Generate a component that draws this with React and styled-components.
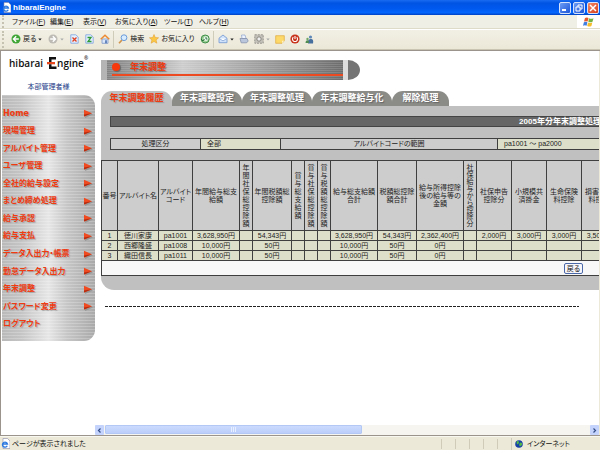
import React from "react";
import styled, { createGlobalStyle, css } from "styled-components";

const Global = createGlobalStyle`
  * { box-sizing: border-box; }
  html, body { margin: 0; padding: 0; background: #ece9d8; }
  body, button, a { font-family: "Liberation Sans", "Noto Sans CJK JP", sans-serif; font-feature-settings: "palt"; }
  button { padding: 0; margin: 0; border: 0; background: none; color: inherit; }
  a { text-decoration: none; }
`;

const Window = styled.div`
  height: 100vh;
  display: flex;
  flex-direction: column;
  overflow: hidden;
  color: #222;
`;

const TitleBar = styled.header`
  flex: none;
  height: 15px;
  display: flex;
  align-items: center;
  gap: 2px;
  padding: 0 1px 0 2px;
  background: linear-gradient(#1a6cf0, #0054e3 20%, #0058ee 55%, #0366fd 85%, #0040c0);
`;

const WindowTitle = styled.h1`
  flex: 1;
  margin: 0;
  font: bold 8px/14px "Liberation Sans", sans-serif;
  color: #fff;
`;

const WindowButton = styled.button`
  width: 12px;
  height: 12px;
  display: grid;
  place-items: center;
  border: 1px solid #d5e2fb;
  border-radius: 2px;
  background: ${(p) => (p.$close ? "linear-gradient(135deg, #f08a68, #d8401c)" : "linear-gradient(135deg, #6c9cf5, #1c55d8)")};
`;

const MenuRow = styled.div`
  flex: none;
  height: 14px;
  display: flex;
  background: #f0efe6;
  border-bottom: 1px solid #dedbc8;
`;

const Menu = styled.nav`
  flex: 1;
  display: grid;
  grid-template-columns: 38px 33px 32px 49px 35px 1fr;
  align-items: center;
  justify-items: start;
  margin-left: 2px;
  padding-left: 8px;
  border-left: 2px dotted #c5c2b2;
`;

const MenuItem = styled.button`
  font-size: 7px;
  line-height: 12px;
  white-space: nowrap;
  color: #111;
`;

const FlagBox = styled.div`
  width: 23px;
  display: grid;
  place-items: center;
  background: #fff;
`;

const Toolbar = styled.div`
  flex: none;
  height: 21px;
  display: flex;
  align-items: center;
  padding: 0 2px;
  background: linear-gradient(#f2f0e6, #ece8d8);
  border-bottom: 1px solid #c9c5b2;
  box-shadow: inset 0 1px #fff;
`;

const ToolGroup = styled.div`
  display: flex;
  align-items: center;
  gap: ${(p) => p.$gap}px;
  height: 17px;
  padding: 0 3px 0 ${(p) => p.$inset || 4}px;
  & + & { border-left: 1px solid #d0ccba; }
  &:first-child { border-left: 2px dotted #c5c2b2; }
`;

const ToolButton = styled.button`
  display: flex;
  align-items: center;
  gap: 2px;
  font-size: 7px;
  line-height: 12px;
  white-space: nowrap;
  color: #111;
  svg { display: block; }
`;

const Viewport = styled.div`
  flex: 1;
  min-height: 0;
  display: flex;
  background: #fff;
  border: solid #9a948c;
  border-width: 1px 0 1px 1px;
`;

const Sidebar = styled.aside`
  flex: none;
  width: 94px;
  padding-left: 1px;
`;

const LogoBox = styled.div`
  height: 30px;
  padding: 5px 0 0 7px;
`;

const LogoText = styled.div`
  display: flex;
  align-items: center;
  font: 600 10px/14px "Open Sans", "Noto Sans", sans-serif;
  color: #111;
  sup { align-self: flex-start; font-size: 5px; line-height: 5px; }
  svg { margin-left: 4px; }
`;

const UserName = styled.p`
  margin: 0;
  height: 14px;
  text-align: center;
  font-size: 7px;
  line-height: 12px;
  color: #223a88;
`;

const striped = css`
  background:
    repeating-linear-gradient(rgba(255, 255, 255, 0.22) 0 1px, transparent 1px 3px),
    linear-gradient(90deg, #b9b9b9, #c4c4c4 20%, #e6e6e6 50%, #c6c6c6 70%, #a9a9a9);
`;

const SideMenu = styled.nav`
  ${striped}
  min-height: 246px;
  display: flex;
  flex-direction: column;
  padding: 10px 0 8px;
  border-radius: 0 11px 11px 0;
`;

const SideLink = styled.a`
  flex: 1;
  display: flex;
  align-items: center;
  justify-content: space-between;
  padding: 0 2px 0 1px;
  font-size: 8px;
  line-height: 12px;
  font-weight: bold;
  font-family: ${(p) => (p.$latin ? '"DejaVu Sans", sans-serif' : "inherit")};
  color: #f03a10;
  text-shadow: 1px 1px 1px #a0a0a0;
  white-space: nowrap;
`;

const Content = styled.main`
  flex: 1;
  min-width: 0;
  display: flex;
  flex-direction: column;
  border-right: 1px solid #ece9d8;
`;

const Scrolled = styled.div`
  flex: 1;
  min-height: 0;
  overflow: hidden;
  padding: 9px 0 0 6px;
`;

const Banner = styled.div`
  display: flex;
  height: 20px;
  width: 259px;
`;

const BannerEdge = styled.span`
  width: ${(p) => p.$w}px;
  background: ${(p) => p.$tone};
  border-radius: ${(p) => (p.$round ? "0 12px 12px 0 / 0 10px 10px 0" : "0")};
`;

const BannerBody = styled.div`
  flex: 1;
  display: flex;
  flex-direction: column;
  padding: 0 0 4px 5px;
  background:
    repeating-linear-gradient(rgba(255, 255, 255, 0.14) 0 1px, transparent 1px 2px),
    linear-gradient(90deg, #828282, #a0a0a0 15%, #cccccc 32%, #a4a4a4 60%, #6c6c6c);
`;

const BannerTitle = styled.h2`
  flex: 1;
  display: flex;
  align-items: center;
  gap: 10px;
  margin: 0;
  border-bottom: 2px solid #ee4a22;
  font-size: 9px;
  line-height: 14px;
  color: #f03a10;
  text-shadow: 1px 1px 1px #777;
`;

const Dot = styled.span`
  width: 8px;
  height: 8px;
  border-radius: 50%;
  background: #f6380a;
  box-shadow: 1px 1px 1px #666;
`;

const Tabs = styled.div`
  display: flex;
  margin-top: 11px;
`;

const Tab = styled.button`
  height: 15px;
  width: ${(p) => p.$w}px;
  margin-right: 1px;
  margin-left: ${(p) => (p.$active ? 0 : -1)}px;
  border-radius: 11px 11px 0 0;
  font-size: 9px;
  line-height: 15px;
  font-weight: bold;
  white-space: nowrap;
  color: ${(p) => (p.$active ? "#f03a10" : "#fff")};
  background: ${(p) => (p.$active ? "#c0c0c0" : "#8b8b88")};
  text-shadow: 1px 1px 1px ${(p) => (p.$active ? "#999" : "#666")};
`;

const Panel = styled.section`
  background: #c0c0c0;
  border-radius: 0 0 0 13px;
  padding: 10px 0 14px;
  overflow: hidden;
`;

const Heading = styled.h3`
  width: 940px;
  margin: 0 0 0 9px;
  border: 1px solid #444;
  background: #666;
  color: #fff;
  text-align: center;
  font-size: 8px;
  line-height: 9px;
  white-space: nowrap;
`;

const Table = styled.table`
  table-layout: fixed;
  border-collapse: collapse;
  font-size: 7px;
  line-height: 8px;
  text-align: center;
  color: #222;
  width: ${(p) => p.$w}px;
  margin: ${(p) => p.$margin || "0"};
  th, td { border: 1px solid #3f3f3f; padding: 0; font-weight: normal; white-space: nowrap; overflow: hidden; }
`;

const Col = styled.col`
  width: ${(p) => p.$w}px;
`;

const InfoHead = styled.th`
  height: 11px;
  background: #cdcdcd;
`;

const InfoValue = styled.td`
  background: #dedfca;
  && { padding-left: 6px; text-align: left; }
`;

const HeadCell = styled.th`
  height: 70px;
  background: #cdcdcd;
  line-height: ${(p) => (p.$tight ? 7 : 8)}px;
  && { white-space: pre-line; }
`;

const Cell = styled.td`
  height: 10px;
  background: #dedfca;
`;

const FootCell = styled.td`
  height: 15px;
  background: #f8f8f8;
  && { padding-left: 462px; text-align: left; }
`;

const BackButton = styled.button`
  display: block;
  width: 19px;
  height: 11px;
  border: 1px solid #4a68a8;
  border-radius: 2px;
  background: #f6f6fb;
  font-size: 7px;
  line-height: 9px;
  color: #111;
`;

const Divider = styled.hr`
  height: 1px;
  margin: 16px 20px 0 4px;
  border: 0;
  background: repeating-linear-gradient(90deg, #222 0 3px, #fff 3px 4px);
`;

const ScrollBar = styled.div`
  flex: none;
  height: 10px;
  display: flex;
  background: #f6f5f0;
`;

const ScrollButton = styled.button`
  width: 9px;
  display: grid;
  place-items: center;
  border-radius: 1px;
  background: #c3d3fb;
`;

const ScrollTrack = styled.div`
  flex: 1;
  padding: 0 1px;
`;

const ScrollThumb = styled.div`
  width: 53%;
  height: 9px;
  display: grid;
  place-items: center;
  border-radius: 1px;
  background: linear-gradient(#cbdafe, #bccffa);
  border: 1px solid #b4c8f6;
`;

const StatusBar = styled.footer`
  flex: none;
  height: 14px;
  display: flex;
  align-items: center;
  gap: 2px;
  padding: 0 1px;
  background: #ece9d8;
  border-top: 1px solid #f8f7f0;
  font-size: 7px;
  line-height: 12px;
  color: #111;
`;

const StatusText = styled.span`
  flex: 1;
`;

const StatusSlot = styled.span`
  width: 12px;
  height: 10px;
  border-left: 1px solid #cfcbb8;
`;

const StatusZone = styled.span`
  width: 88px;
  display: flex;
  align-items: center;
  gap: 4px;
  padding-left: 3px;
  border-left: 1px solid #cfcbb8;
`;

const PageIcon = () => (
  <svg width="9" height="11" viewBox="0 0 9 11">
    <path d="M2 0.5h4.5L9 3v7.5H2z" fill="#fff" stroke="#88a" strokeWidth=".6" />
    <path d="M6.2 7.8A2.5 2.5 0 1 1 6.4 6H2.2" fill="none" stroke="#2a78e0" strokeWidth="1.4" />
  </svg>
);

const Flag = () => (
  <svg width="11" height="10" viewBox="0 0 11 10">
    <path d="M2 1q2-1 3.5 0L4.6 4.6Q3 3.8 1 4.6z" fill="#e8582c" />
    <path d="M6 1.2q2 1 4.5 0l-1 3.6q-2 1-4.2 0z" fill="#74b343" />
    <path d="M.9 5.2q2-.8 3.5 0l-.8 3.6q-1.7-.9-3.6 0z" fill="#3f7de0" />
    <path d="M5.1 5.4q2 1 4.2 0l-.9 3.6q-2 1-4.2 0z" fill="#f5bd2a" />
  </svg>
);

const Arrow = ({ dir, color }) => (
  <svg width="10" height="10" viewBox="0 0 10 10">
    <circle cx="5" cy="5" r="4.5" fill={color} />
    <path d={dir === "left" ? "M5.2 2.3 2.5 5l2.7 2.7M2.8 5h5" : "M4.8 2.3 7.5 5 4.8 7.7M7.2 5h-5"} fill="none" stroke="#fff" strokeWidth="1.4" />
  </svg>
);

const Caret = ({ color = "#222" }) => (
  <svg width="4" height="3" viewBox="0 0 4 3"><path d="M.3.5h3.4L2 2.6z" fill={color} /></svg>
);

const DocIcon = ({ children }) => (
  <svg width="9" height="10" viewBox="0 0 9 10">
    <path d="M.8.8h5L8.2 3v6.2H.8z" fill="#e4f0ff" stroke="#88aae0" strokeWidth=".9" />
    {children}
  </svg>
);

const HomeIcon = () => (
  <svg width="10" height="10" viewBox="0 0 10 10">
    <path d="M2 5v4.3h6V5z" fill="#dce8fa" stroke="#7c98c8" strokeWidth=".8" />
    <path d="M.7 5.2 5 1.2l4.3 4" fill="none" stroke="#ec8a32" strokeWidth="1.5" />
    <path d="M5.2 6.2h1.6v3H5.2z" fill="#4a70b0" />
  </svg>
);

const SearchIcon = () => (
  <svg width="10" height="10" viewBox="0 0 10 10">
    <path d="M4 6 1 9.3" stroke="#d0954a" strokeWidth="1.7" />
    <circle cx="6" cy="3.7" r="2.9" fill="#d8ecff" stroke="#6a9ad8" />
  </svg>
);

const StarIcon = () => (
  <svg width="10" height="10" viewBox="0 0 10 10">
    <path d="m5 .5 1.3 3 3.3.3-2.5 2.1.8 3.3L5 7.5 2.1 9.2l.8-3.3L.4 3.8l3.3-.3z" fill="#fbc846" stroke="#e09a28" strokeWidth=".5" />
  </svg>
);

const HistoryIcon = () => (
  <svg width="10" height="10" viewBox="0 0 10 10">
    <circle cx="5.2" cy="5" r="4" fill="#9dcf96" stroke="#3d8d46" />
    <circle cx="6" cy="4.6" r="2.3" fill="#eaf6ee" />
    <path d="M6 3v2h1.5M1 5l2 2 1.5-2" fill="none" stroke="#256b35" strokeWidth=".9" />
  </svg>
);

const MailIcon = () => (
  <svg width="10" height="10" viewBox="0 0 10 10">
    <path d="M1 4.2 5 1l4 3.2v4.500H1z" fill="#cfe2fa" stroke="#7c9ed4" strokeWidth=".9" />
    <path d="m1 4.5 4 2.3 4-2.3" fill="#fff" stroke="#7c9ed4" strokeWidth=".7" />
  </svg>
);

const PrintIcon = () => (
  <svg width="10" height="10" viewBox="0 0 10 10">
    <path d="M2.5 1h3.5l1 3.5h-4z" fill="#eef4ff" stroke="#8aa0c8" strokeWidth=".7" />
    <path d="M1 4.5h7l1.2 2.5-1.5 1.8H2.2z" fill="#b9c6dc" stroke="#7c8aa8" strokeWidth=".7" />
  </svg>
);

const EditIcon = () => (
  <svg width="10" height="10" viewBox="0 0 10 10">
    <path d="M.8.8h8.4v8.4H.8z" fill="#c4c2ba" stroke="#96948c" strokeDasharray="2 1" />
    <circle cx="5" cy="5" r="2.2" fill="#eee" stroke="#88867e" />
  </svg>
);

const NoteIcon = () => (
  <svg width="10" height="9" viewBox="0 0 10 9">
    <path d="M.7.7h8.6v5.1L7 8.3H.7z" fill="#fdd96a" stroke="#dfa93a" strokeWidth=".7" />
    <path d="M9.3 5.8H7v2.5z" fill="#fff2c0" />
  </svg>
);

const PowerIcon = () => (
  <svg width="10" height="10" viewBox="0 0 10 10">
    <circle cx="5" cy="5" r="4.6" fill="#c8341c" />
    <path d="M3.3 3.2a2.5 2.5 0 1 0 3.4 0M5 2v3" fill="none" stroke="#fff" strokeWidth="1.1" />
  </svg>
);

const MessengerIcon = () => (
  <svg width="9" height="9" viewBox="0 0 9 9">
    <circle cx="5.5" cy="2" r="1.6" fill="#5d88b8" />
    <path d="M3 8.5q-1-4 2.5-4.5T8 8.5z" fill="#476f9e" />
    <circle cx="2.5" cy="4" r="1.2" fill="#6fa868" />
    <path d="M.5 8q0-3 2-2.7T4 8z" fill="#4f8c54" />
  </svg>
);

const LogoE = () => (
  <svg width="10" height="13" viewBox="0 0 10 13">
    <path d="M2 0h7v2.5H4.500V5H2z" fill="#111" />
    <path d="M0 5h8v2.3H0z" fill="#e8481e" />
    <path d="M2 7.3h2.500v2.2H9.500V12H2z" fill="#111" />
  </svg>
);

const SideArrow = () => (
  <svg width="10" height="9" viewBox="0 0 10 9">
    <path d="M2 2 10 5.5 2 9z" fill="#8a8a8a" opacity=".7" />
    <path d="M1 .8 9 4.2 1 7.6z" fill="#ef4a20" />
    <path d="M1 7.6 9 4.2 1 5.6z" fill="#b52c10" />
  </svg>
);

const Globe = () => (
  <svg width="8" height="8" viewBox="0 0 8 8">
    <circle cx="4" cy="4" r="3.8" fill="#1740a8" />
    <path d="M1.5 1.5q2-1 2.5.5T2 4.5zM5 2.5l2 .5v2L5 6.5 4 5z" fill="#52b848" />
  </svg>
);

const Chevron = ({ dir }) => (
  <svg width="5" height="5" viewBox="0 0 5 5">
    <path d={dir === "left" ? "M3.5.5l-2 2 2 2" : "M1.5.5l2 2-2 2"} fill="none" stroke="#354e88" strokeWidth="1.2" />
  </svg>
);

const menus = [
  ["ファイル", "F"], ["編集", "E"], ["表示", "V"], ["お気に入り", "A"], ["ツール", "T"], ["ヘルプ", "H"],
];

const sideItems = [
  "Home", "現場管理", "アルバイト管理", "ユーザ管理", "全社的給与設定", "まとめ締め処理", "給与承認",
  "給与支払", "データ入出力・帳票", "勤怠データ入出力", "年末調整", "パスワード変更", "ログアウト",
];

const tabs = [
  ["年末調整履歴", 71], ["年末調整設定", 70], ["年末調整処理", 70], ["年末調整給与化", 80], ["解除処理", 57],
];

const stack = (s) => s.split("").join("\n");

const columns = [
  ["番号", 16], ["アルバイト名", 41], ["アルバイト\nコード", 34], ["年間給与総支\n給額", 47],
  [stack("年間社保総控除額"), 13], ["年間税額総\n控除額", 39], [stack("賞与総支給額"), 13],
  [stack("賞与社保総控除額"), 13], [stack("賞与税額総控除額"), 13], ["給与総支給額\n合計", 47],
  ["税額総控除\n額合計", 39], ["給与所得控除\n後の給与等の\n金額", 47], [stack("社保給与から控除分"), 13],
  ["社保申告\n控除分", 35], ["小規模共\n済掛金", 35], ["生命保険\n料控除", 35], ["損害保険\n料控除", 35],
];

const rows = [
  ["1", "徳川家康", "pa1001", "3,628,950円", "", "54,343円", "", "", "", "3,628,950円", "54,343円", "2,362,400円", "", "2,000円", "3,000円", "3,000円", "3,500円"],
  ["2", "西郷隆盛", "pa1008", "10,000円", "", "50円", "", "", "", "10,000円", "50円", "0円", "", "", "", "", ""],
  ["3", "織田信長", "pa1011", "10,000円", "", "50円", "", "", "", "10,000円", "50円", "0円", "", "", "", "", ""],
];

const tableWidth = columns.reduce((sum, c) => sum + c[1], 1);

export default function App() {
  return (
    <Window>
      <Global />
      <TitleBar>
        <PageIcon />
        <WindowTitle>hibaraiEngine</WindowTitle>
        <WindowButton aria-label="最小化">
          <svg width="8" height="8"><path d="M1 6h4" stroke="#fff" strokeWidth="2" /></svg>
        </WindowButton>
        <WindowButton aria-label="元に戻す">
          <svg width="8" height="8"><path d="M3 3V1h4v4H5M1 3h4v4H1z" fill="none" stroke="#fff" /></svg>
        </WindowButton>
        <WindowButton $close aria-label="閉じる">
          <svg width="8" height="8"><path d="m1 1 6 6M7 1 1 7" stroke="#fff" strokeWidth="1.5" /></svg>
        </WindowButton>
      </TitleBar>

      <MenuRow>
        <Menu>
          {menus.map(([label, key]) => (
            <MenuItem key={key}>{label}(<u>{key}</u>)</MenuItem>
          ))}
        </Menu>
        <FlagBox><Flag /></FlagBox>
      </MenuRow>

      <Toolbar>
        <ToolGroup $gap={6} $inset={7}>
          <ToolButton><Arrow dir="left" color="#3fa535" />戻る<Caret /></ToolButton>
          <ToolButton aria-label="進む"><Arrow dir="right" color="#bdbbb4" /><Caret color="#aaa" /></ToolButton>
          <ToolButton aria-label="中止"><DocIcon><path d="m2.5 3.5 4 4m0-4-4 4" stroke="#e04020" strokeWidth="1.3" /></DocIcon></ToolButton>
          <ToolButton aria-label="更新"><DocIcon><path d="M2.5 3.5h3.5l-3 4h3.5" fill="none" stroke="#2f9a38" strokeWidth="1.3" /></DocIcon></ToolButton>
          <ToolButton aria-label="ホーム"><HomeIcon /></ToolButton>
        </ToolGroup>
        <ToolGroup $gap={5}>
          <ToolButton><SearchIcon />検索</ToolButton>
          <ToolButton><StarIcon />お気に入り</ToolButton>
          <ToolButton aria-label="履歴"><HistoryIcon /></ToolButton>
        </ToolGroup>
        <ToolGroup $gap={5}>
          <ToolButton aria-label="メール"><MailIcon /><Caret /></ToolButton>
          <ToolButton aria-label="印刷"><PrintIcon /></ToolButton>
          <ToolButton aria-label="編集"><EditIcon /><Caret color="#aaa" /></ToolButton>
          <ToolButton aria-label="メモ"><NoteIcon /></ToolButton>
          <ToolButton aria-label="電源"><PowerIcon /></ToolButton>
          <ToolButton aria-label="メッセンジャー"><MessengerIcon /></ToolButton>
        </ToolGroup>
      </Toolbar>

      <Viewport>
        <Sidebar>
          <LogoBox>
            <LogoText>hibarai<LogoE />ngine<sup>®</sup></LogoText>
          </LogoBox>
          <UserName>本部管理者様</UserName>
          <SideMenu>
            {sideItems.map((label, i) => (
              <SideLink href="#" key={label} $latin={i === 0}>
                {label}
                {i < sideItems.length - 1 && <SideArrow />}
              </SideLink>
            ))}
          </SideMenu>
        </Sidebar>

        <Content>
          <Scrolled>
            <Banner>
              <BannerEdge $w={6} $tone="#b4b4b4" />
              <BannerBody>
                <BannerTitle><Dot />年末調整</BannerTitle>
              </BannerBody>
              <BannerEdge $w={5} $tone="#dcdcdc" />
              <BannerEdge $w={12} $tone="#747474" $round />
            </Banner>

            <Tabs>
              {tabs.map(([label, w], i) => (
                <Tab key={label} $w={w} $active={i === 0}>{label}</Tab>
              ))}
            </Tabs>

            <Panel>
              <Heading>2005年分年末調整処理履歴一覧表</Heading>
              <Table $w={940} $margin="11px 0 10px 9px">
                <colgroup><Col $w={90} /><Col $w={80} /><Col $w={217} /><Col /></colgroup>
                <tbody>
                  <tr>
                    <InfoHead scope="row">処理区分</InfoHead>
                    <InfoValue>全部</InfoValue>
                    <InfoHead scope="row">アルバイトコードの範囲</InfoHead>
                    <InfoValue>pa1001 ～ pa2000</InfoValue>
                  </tr>
                </tbody>
              </Table>
              <Table $w={tableWidth}>
                <colgroup>{columns.map(([label, w]) => <Col key={label} $w={w} />)}</colgroup>
                <thead>
                  <tr>{columns.map(([label]) => <HeadCell key={label} $tight={label.length > 16}>{label}</HeadCell>)}</tr>
                </thead>
                <tbody>
                  {rows.map((row) => (
                    <tr key={row[0]}>{row.map((v, i) => <Cell key={i}>{v}</Cell>)}</tr>
                  ))}
                </tbody>
                <tfoot>
                  <tr><FootCell colSpan={columns.length}><BackButton>戻る</BackButton></FootCell></tr>
                </tfoot>
              </Table>
            </Panel>
            <Divider />
          </Scrolled>
          <ScrollBar>
            <ScrollButton aria-label="左へ"><Chevron dir="left" /></ScrollButton>
            <ScrollTrack>
              <ScrollThumb><svg width="5" height="5"><path d="M.5 0v5M2.500 0v5M4.500 0v5" stroke="#e8effe" /></svg></ScrollThumb>
            </ScrollTrack>
            <ScrollButton aria-label="右へ"><Chevron dir="right" /></ScrollButton>
          </ScrollBar>
        </Content>
      </Viewport>

      <StatusBar>
        <PageIcon />
        <StatusText>ページが表示されました</StatusText>
        {[0, 1, 2, 3, 4].map((n) => <StatusSlot key={n} />)}
        <StatusZone><Globe />インターネット</StatusZone>
      </StatusBar>
    </Window>
  );
}
